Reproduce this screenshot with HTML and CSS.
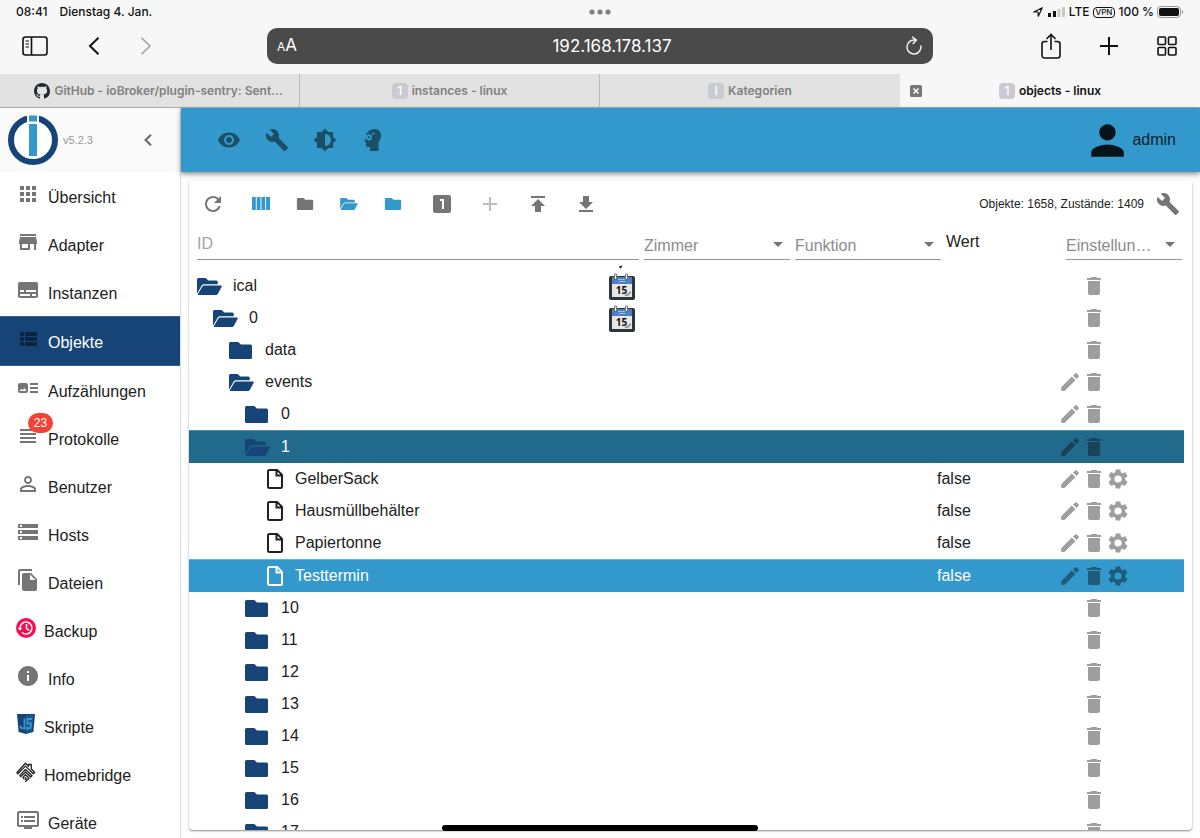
FILE: index.html
```
<!DOCTYPE html>
<html lang="de">
<head>
<meta charset="utf-8">
<meta name="viewport" content="width=device-width, initial-scale=1">
<title>objects - linux</title>
<link rel="stylesheet" href="styles.css">
</head>
<body>
<svg class="sprite" aria-hidden="true">
  <symbol id="folder" viewBox="0 0 23 17"><path d="M1.500 0H9.300l2.700 2.500h9.500A1.500 1.500 0 0 1 23 4v11.500a1.500 1.500 0 0 1-1.500 1.500h-20A1.500 1.500 0 0 1 0 15.500v-14A1.500 1.500 0 0 1 1.500 0z"/></symbol>
  <symbol id="folder-open" viewBox="0 0 25 17"><path d="M1.500 0h7.200l2.600 2.600h7.900A1.500 1.500 0 0 1 20.700 4v2.300H7.500c-1.600 0-2.600.6-3.300 1.900L.3 15.200 0 14.800V1.500A1.500 1.500 0 0 1 1.500 0zM8 7.600h16.200c.6 0 .9.5.6 1l-4 7.300c-.4.700-1 1.100-1.900 1.100H1.600c-.6 0-.9-.4-.6-1l4-7C5.700 7.900 6.500 7.600 8 7.600z"/></symbol>
  <symbol id="file" viewBox="0 0 16 20"><path d="M2.500 1h7.700L15 5.800v11.700a1.500 1.500 0 0 1-1.500 1.500h-11A1.500 1.500 0 0 1 1 17.500v-15A1.500 1.500 0 0 1 2.500 1zM9.500 1.200v5.200h5.300" fill="none" stroke="currentColor" stroke-width="2"/></symbol>
  <symbol id="trash" viewBox="0 0 24 24"><path d="M6 19c0 1.100.9 2 2 2h8c1.100 0 2-.9 2-2V7H6v12zM19 4h-3.500l-1-1h-5l-1 1H5v2h14V4z"/></symbol>
  <symbol id="pencil" viewBox="0 0 18 18"><path d="M.2 14.200 10.800 3.600 14.400 7.200 3.800 17.800c-.3.200-3 .3-3.300 0-.3-.3-.5-3.400-.3-3.600zM12 2.500 14.200.4c.4-.4 1-.4 1.400 0l2 2c.4.400.4 1 0 1.400L15.500 6z"/></symbol>
  <symbol id="gear" viewBox="2 2 20 20"><path d="M19.140 12.940c.04-.3.060-.610.060-.940 0-.320-.020-.640-.070-.940l2.030-1.580c.180-.140.230-.410.120-.610l-1.920-3.320c-.120-.220-.370-.290-.590-.220l-2.390.960c-.5-.380-1.030-.7-1.620-.940l-.360-2.540c-.040-.240-.240-.410-.480-.410h-3.840c-.240 0-.430.170-.470.410l-.360 2.540c-.590.240-1.130.570-1.620.940l-2.390-.960c-.220-.080-.470 0-.590.220L2.740 8.870c-.120.210-.080.470.120.610l2.030 1.580c-.050.3-.090.630-.090.940s.020.640.070.940l-2.030 1.580c-.180.140-.230.410-.120.610l1.920 3.320c.120.220.370.290.590.220l2.390-.960c.5.380 1.030.7 1.620.940l.360 2.540c.050.240.240.410.480.410h3.840c.240 0 .440-.170.470-.410l.360-2.540c.590-.240 1.130-.560 1.620-.940l2.390.960c.220.080.470 0 .590-.220l1.920-3.320c.120-.220.070-.470-.120-.610l-2.010-1.580zM12 15.600A3.600 3.600 0 1 1 12 8.400a3.600 3.600 0 0 1 0 7.200z"/></symbol>
  <symbol id="wrench" viewBox="0 0 24 24"><path d="M22.700 19l-9.100-9.100c.9-2.300.4-5-1.500-6.900-2-2-5-2.400-7.400-1.300L9 6 6 9 1.600 4.700C.4 7.100.9 10.100 2.900 12.100c1.900 1.900 4.600 2.400 6.900 1.500l9.100 9.100c.4.4 1 .4 1.400 0l2.300-2.300c.5-.4.5-1.100.1-1.400z"/></symbol>
  <symbol id="calendar" viewBox="0 0 26 28">
    <rect x="0" y="4" width="26" height="24" rx="2" fill="#2c3539"/>
    <rect x="3" y="5" width="20" height="20" fill="#e6e6e6"/>
    <rect x="3" y="5" width="20" height="7" fill="#4a80c4"/>
    <path d="M9 7.500h8M10 9.500h6" stroke="#9bbce6"/>
    <path d="M6.500 3v3.500M17.500 3v3.500" stroke="#555" stroke-width="3" stroke-linecap="round"/>
    <path d="M6.500 3v3.500M17.500 3v3.500" stroke="#eee" stroke-width="1.500" stroke-linecap="round"/>
    <text x="12.500" y="21.500" text-anchor="middle" font-family="Open Sans, sans-serif" font-weight="700" font-size="10" fill="#111">15</text>
    <path d="M15 24l7-5v2l-3 3z" fill="#999"/>
  </symbol>
</svg>

<header class="browser">
  <div class="status">
    <span class="status-time"><time>08:41</time><span>Dienstag 4. Jan.</span></span>
    <svg class="dots" width="22" height="6" viewBox="0 0 22 6"><circle cx="3" cy="3" r="2.600"/><circle cx="11" cy="3" r="2.600"/><circle cx="19" cy="3" r="2.600"/></svg>
    <span class="status-net">
      <svg width="10" height="10" viewBox="0 0 10 10" fill="none" stroke="#111" stroke-width="1.200" stroke-linejoin="round"><path d="M.8 5 9.300.8 5.300 9.300 5 5z"/></svg>
      <svg class="bars" width="17" height="10" viewBox="0 0 17 10"><path d="M0 6h3v4H0zM5 4h3v6H5z" fill="#111"/><path d="M9.500 2h3v8h-3zM14 0h3v10h-3z" fill="#c8c8c8"/></svg>
      <span>LTE</span>
      <span class="vpn">VPN</span>
      <span>100 %</span>
      <svg width="27" height="12" viewBox="0 0 27 12"><rect x=".5" y=".5" width="23" height="11" rx="3.500" fill="none" stroke="#999"/><rect x="2" y="2" width="20" height="8" rx="2"/><path d="M25 4v4c1.700-.6 1.700-3.400 0-4z" fill="#999"/></svg>
    </span>
  </div>

  <div class="nav">
    <div class="nav-side nav-left">
      <button type="button" aria-label="Seitenleiste"><svg width="26" height="20" viewBox="0 0 26 20" fill="none" stroke="#111" stroke-width="1.600"><rect x="1" y="1" width="24" height="18" rx="2.500"/><path d="M9.500 1v18"/><path d="M3.500 5h3.500M3.500 8h3.500M3.500 11h3.500" stroke-width="1.200"/></svg></button>
      <button type="button" aria-label="Zurück"><svg width="12" height="18" viewBox="0 0 12 18" fill="none" stroke="#111" stroke-width="2"><path d="M10.500.8 2 9l8.500 8.200"/></svg></button>
      <button type="button" aria-label="Vorwärts"><svg width="12" height="18" viewBox="0 0 12 18" fill="none" stroke="#a5a5a5" stroke-width="1.600"><path d="M1.500.8 10 9l-8.500 8.200"/></svg></button>
    </div>
    <div class="address">
      <button type="button" class="reader" aria-label="Darstellung"><small>A</small>A</button>
      <input type="text" value="192.168.178.137" aria-label="Adresse">
      <button type="button" aria-label="Neu laden"><svg width="18" height="20" viewBox="0 0 18 20" fill="none" stroke="#f2f2f2" stroke-width="1.500"><path d="M15.800 9.500A7 7 0 1 1 9 4h2M7.200.8 11.300 4 7.800 8"/></svg></button>
    </div>
    <div class="nav-side nav-right">
      <button type="button" aria-label="Teilen"><svg width="20" height="26" viewBox="0 0 20 26" fill="none" stroke="#111" stroke-width="1.600"><path d="M6.500 8.500H3.500a2.500 2.500 0 0 0-2.500 2.500v11.500A2.500 2.500 0 0 0 3.500 25h13a2.500 2.500 0 0 0 2.500-2.500V11a2.500 2.500 0 0 0-2.500-2.500h-3M10 17V2M5.500 6 10 1.500 14.500 6"/></svg></button>
      <button type="button" aria-label="Neuer Tab"><svg width="18" height="18" viewBox="0 0 18 18" stroke="#111" stroke-width="2"><path d="M9 0v18M0 9h18"/></svg></button>
      <button type="button" aria-label="Tabübersicht"><svg width="20" height="20" viewBox="0 0 20 20" fill="none" stroke="#111" stroke-width="1.600"><rect x="1" y="1" width="7.500" height="7.500" rx="1"/><rect x="11.500" y="1" width="7.500" height="7.500" rx="1"/><rect x="1" y="11.500" width="7.500" height="7.500" rx="1"/><rect x="11.500" y="11.500" width="7.500" height="7.500" rx="1"/></svg></button>
    </div>
  </div>

  <div class="tabs">
    <div class="tab tab-github"><svg width="16" height="16" viewBox="0 0 16 16" fill="#24292f"><path d="M8 0C3.580 0 0 3.580 0 8c0 3.540 2.290 6.530 5.470 7.590.4.070.550-.170.550-.380 0-.190-.010-.820-.010-1.490-2.010.370-2.530-.490-2.690-.940-.090-.230-.480-.940-.820-1.130-.280-.150-.680-.520-.010-.530.630-.010 1.080.580 1.230.820.720 1.210 1.870.870 2.330.660.070-.520.280-.870.510-1.070-1.780-.2-3.640-.890-3.640-3.950 0-.870.310-1.590.820-2.150-.080-.2-.360-1.020.080-2.120 0 0 .670-.210 2.200.820.640-.180 1.320-.270 2-.270s1.360.090 2 .270c1.530-1.040 2.200-.820 2.200-.820.440 1.100.160 1.920.080 2.120.510.560.820 1.270.820 2.150 0 3.070-1.870 3.750-3.650 3.950.290.250.540.730.540 1.480 0 1.070-.010 1.930-.010 2.200 0 .210.150.460.550.380A8.010 8.010 0 0 0 16 8c0-4.420-3.580-8-8-8z"/></svg><span>GitHub - ioBroker/plugin-sentry: Sent...</span></div>
    <div class="tab"><i class="favicon">1</i><span>instances - linux</span></div>
    <div class="tab"><i class="favicon">I</i><span>Kategorien</span></div>
    <div class="tab tab-active"><button type="button" class="tab-close" aria-label="Tab schließen"><svg width="12" height="12" viewBox="0 0 12 12"><rect width="12" height="12" rx="1.500" fill="#777"/><path d="M3.500 3.500l5 5M8.500 3.500l-5 5" stroke="#fff" stroke-width="1.500"/></svg></button><i class="favicon">1</i><span>objects - linux</span></div>
  </div>
</header>

<div class="app">
  <aside class="sidebar">
    <div class="brand">
      <svg width="50" height="50" viewBox="0 0 50 50"><circle cx="25" cy="25" r="22" fill="#fff" stroke="#164477" stroke-width="6"/><path d="M19 0h12v8H19z" fill="#fff"/><path d="M21 0.500h8v6h-8zM21 9h8v32h-8z" fill="#3399cc"/></svg>
      <span class="version">v5.2.3</span>
      <button type="button" class="collapse" aria-label="Menü einklappen"><svg width="8" height="12" viewBox="0 0 8 12" fill="none" stroke="#666" stroke-width="2"><path d="M7 .7 1.500 6 7 11.300"/></svg></button>
    </div>
    <nav class="menu">
      <a href="#"><svg viewBox="0 0 24 24"><path d="M4 8h4V4H4v4zm6 12h4v-4h-4v4zm-6 0h4v-4H4v4zm0-6h4v-4H4v4zm6 0h4v-4h-4v4zm6-10v4h4V4h-4zm-6 4h4V4h-4v4zm6 6h4v-4h-4v4zm0 6h4v-4h-4v4z"/></svg><span>Übersicht</span></a>
      <a href="#"><svg viewBox="0 0 24 24"><path d="M20 4H4v2h16V4zm1 10v-2l-1-5H4l-1 5v2h1v6h10v-6h4v6h2v-6h1zm-9 4H6v-4h6v4z"/></svg><span>Adapter</span></a>
      <a href="#"><svg viewBox="0 0 24 24"><path d="M20 4H4c-1.100 0-2 .9-2 2v12c0 1.100.9 2 2 2h16c1.100 0 2-.9 2-2V6c0-1.100-.9-2-2-2zM4 12h4v2H4v-2zm10 6H4v-2h10v2zm6 0h-4v-2h4v2zm0-4H10v-2h10v2z"/></svg><span>Instanzen</span></a>
      <a href="#" class="current" aria-current="page"><svg viewBox="0 0 24 24"><path d="M4 14h4v-4H4v4zm0 5h4v-4H4v4zM4 9h4V5H4v4zm5 5h12v-4H9v4zm0 5h12v-4H9v4zM9 5v4h12V5H9z"/></svg><span>Objekte</span></a>
      <a href="#"><svg viewBox="0 0 24 24"><path d="M22 13h-8v-2h8v2zm0-6h-8v2h8V7zm-8 10h8v-2h-8v2zm-2-8v6c0 1.100-.9 2-2 2H4c-1.100 0-2-.9-2-2V9c0-1.100.9-2 2-2h6c1.100 0 2 .9 2 2zm-1.500 6l-2.250-3-1.750 2.260-1.250-1.510L3.500 15h7z"/></svg><span>Aufzählungen</span></a>
      <a href="#"><svg viewBox="0 0 24 24"><path d="M4 15h16v-2H4v2zm0 4h16v-2H4v2zm0-8h16V9H4v2zm0-6v2h16V5H4z"/></svg><span>Protokolle</span><b class="badge">23</b></a>
      <a href="#"><svg viewBox="0 0 24 24"><path d="M12 5.900c1.160 0 2.100.940 2.100 2.100s-.940 2.100-2.100 2.100S9.900 9.160 9.900 8s.940-2.100 2.100-2.100m0 9c2.970 0 6.100 1.460 6.100 2.100v1.100H5.900V17c0-.640 3.130-2.100 6.100-2.100M12 4C9.790 4 8 5.790 8 8s1.790 4 4 4 4-1.790 4-4-1.790-4-4-4zm0 9c-2.670 0-8 1.340-8 4v3h16v-3c0-2.660-5.330-4-8-4z"/></svg><span>Benutzer</span></a>
      <a href="#"><svg viewBox="0 0 24 24"><path d="M2 20h20v-4H2v4zm2-3h2v2H4v-2zM2 4v4h20V4H2zm4 3H4V5h2v2zm-4 7h20v-4H2v4zm2-3h2v2H4v-2z"/></svg><span>Hosts</span></a>
      <a href="#"><svg viewBox="0 0 24 24"><path d="M16 1H4c-1.100 0-2 .9-2 2v14h2V3h12V1zm-1 4l6 6v10c0 1.100-.9 2-2 2H7.990C6.890 23 6 22.100 6 21l.010-14c0-1.100.890-2 1.990-2h7zm-1 7h5.500L14 6.500V12z"/></svg><span>Dateien</span></a>
      <a href="#" class="plugin"><svg viewBox="0 0 20 20"><circle cx="10" cy="10" r="10" fill="#fb0a4e"/><path d="M4 10a6 6 0 1 1 2 4.500M10.500 6v4.500l3 2" fill="none" stroke="#fff" stroke-width="1.500"/><path d="M1.800 10h4.600L4 12.700z" fill="#fff"/></svg><span>Backup</span></a>
      <a href="#"><svg viewBox="0 0 24 24"><path d="M12 2C6.480 2 2 6.480 2 12s4.480 10 10 10 10-4.480 10-10S17.520 2 12 2zm1 15h-2v-6h2v6zm0-8h-2V7h2v2z"/></svg><span>Info</span></a>
      <a href="#" class="plugin"><svg viewBox="0 0 20 20"><path d="M1 0h18l-1.600 18L10 20l-7.400-2z" fill="#164477"/><path d="M10 1.500h7.300L16 16.800l-6 1.600z" fill="#1d568c"/><path d="M8.500 4.500v10l-4-1v-2M16 5h-4.500v4.500H15l-.4 4.200-3.600 1v-2" fill="none" stroke="#3399cc" stroke-width="1.800"/></svg><span>Skripte</span></a>
      <a href="#" class="plugin"><svg viewBox="0 0 20 20" fill="none" stroke="#222" stroke-width="1.300" stroke-linecap="round" stroke-linejoin="round"><path d="M1.800 11.800.9 10.500 9.500 1.200l3 3V2.500h2.800v4.500l3.300 3.500-1.300 1.300-7.800-7.700-7.700 7.700M4.800 14.600l-1-1.200 5.700-6 6.500 6.300-1.300 1.300-5.200-5zM7.800 16.500l-.9-1.100 2.600-2.600 3.500 3.500-3.500 3.200M9.300 15.700l.9.800-1 .9"/></svg><span>Homebridge</span></a>
      <a href="#"><svg viewBox="0 0 24 24"><path d="M21 3H3c-1.100 0-2 .9-2 2v12c0 1.100.9 2 2 2h5v2h8v-2h5c1.100 0 1.990-.9 1.990-2L23 5c0-1.100-.9-2-2-2zm0 14H3V5h18v12zm-2-9H8v2h11V8zm0 4H8v2h11v-2zM7 8H5v2h2V8zm0 4H5v2h2v-2z"/></svg><span>Geräte</span></a>
    </nav>
  </aside>

  <div class="content">
    <div class="appbar">
      <button type="button" aria-label="Sichtbarkeit"><svg viewBox="0 0 24 24"><path d="M12 4.500C7 4.500 2.730 7.610 1 12c1.730 4.390 6 7.500 11 7.500s9.270-3.110 11-7.500c-1.730-4.390-6-7.500-11-7.500zM12 17c-2.760 0-5-2.240-5-5s2.240-5 5-5 5 2.240 5 5-2.240 5-5 5zm0-8c-1.660 0-3 1.340-3 3s1.340 3 3 3 3-1.340 3-3-1.340-3-3-3z"/></svg></button>
      <button type="button" aria-label="Einstellungen"><svg><use href="#wrench"/></svg></button>
      <button type="button" aria-label="Farbschema"><svg viewBox="0 0 24 24"><path d="M20 15.310L23.310 12 20 8.690V4h-4.690L12 .690 8.690 4H4v4.690L.690 12 4 15.310V20h4.690L12 23.310 15.310 20H20v-4.690zM12 18V6c3.310 0 6 2.690 6 6s-2.690 6-6 6z"/></svg></button>
      <button type="button" aria-label="Expertenmodus"><svg viewBox="0 0 24 24"><path d="M13.500 1C17.500 1 20 3.800 20 7.500c0 3-.8 5-2.500 6.300V23H9v-4H6.800C5.600 19 5 18.400 5 17.300V14H4c-.6 0-.8-.4-.5-1L5 9.500C5 4.500 8.500 1 13.500 1z"/><circle cx="7.800" cy="9.300" r="2" fill="none" stroke="#3399cc" stroke-width="1.800"/><path d="M7.800 5.700v1.500M7.800 11.300v1.500M4.700 7.500l1.300.8M9.600 10.300l1.300.8M9.600 8.300l1.300-.8M4.700 11.100l1.300-.8" stroke="#3399cc" stroke-width="1.300"/><circle cx="12.300" cy="5.600" r="1.200" fill="#3399cc"/></svg></button>
      <div class="user"><svg viewBox="0 0 24 24"><path d="M12 12c2.210 0 4-1.790 4-4s-1.790-4-4-4-4 1.790-4 4 1.790 4 4 4zm0 2c-2.670 0-8 1.340-8 4v2h16v-2c0-2.660-5.330-4-8-4z"/></svg><span>admin</span></div>
    </div>

    <main class="page">
      <section class="card">
        <div class="tools">
          <button type="button" aria-label="Aktualisieren"><svg viewBox="0 0 24 24"><path d="M17.650 6.350C16.200 4.900 14.210 4 12 4c-4.420 0-7.990 3.580-7.990 8s3.570 8 7.990 8c3.730 0 6.840-2.550 7.730-6h-2.080c-.820 2.330-3.040 4-5.650 4-3.310 0-6-2.690-6-6s2.690-6 6-6c1.660 0 3.140.690 4.220 1.780L13 11h7V4l-2.350 2.350z"/></svg></button>
          <button type="button" class="blue" aria-label="Spalten"><svg viewBox="0 0 24 24"><path d="M3 5h3.800v13H3zM7.700 5h3.800v13H7.700zM12.400 5h3.800v13h-3.800zM17.100 5H21v13h-3.900z"/></svg></button>
          <div class="levels">
            <button type="button" aria-label="Alle schließen"><svg><use href="#folder"/></svg></button>
            <button type="button" class="blue" aria-label="Alle öffnen"><svg><use href="#folder-open"/></svg></button>
            <button type="button" class="blue" aria-label="Ebene schließen"><svg><use href="#folder"/></svg></button>
          </div>
          <button type="button" aria-label="Zustandsansicht"><svg viewBox="0 0 24 24"><path d="M19 3H5c-1.100 0-2 .9-2 2v14c0 1.100.9 2 2 2h14c1.100 0 2-.9 2-2V5c0-1.100-.9-2-2-2zm-5 14h-2V9h-2V7h4v10z"/></svg></button>
          <button type="button" class="disabled" aria-label="Hinzufügen" disabled><svg viewBox="0 0 24 24"><path d="M19 13h-6v6h-2v-6H5v-2h6V5h2v6h6v2z"/></svg></button>
          <button type="button" aria-label="Hochladen"><svg viewBox="0 0 24 24"><path d="M5 4v2h14V4H5zm0 10h4v6h6v-6h4l-7-7-7 7z"/></svg></button>
          <button type="button" aria-label="Herunterladen"><svg viewBox="0 0 24 24"><path d="M19 10h-4V4H9v6H5l7 7 7-7zM5 18v2h14v-2H5z"/></svg></button>
          <span class="count">Objekte: 1658, Zustände: 1409</span>
          <button type="button" aria-label="Spalten anpassen"><svg><use href="#wrench"/></svg></button>
        </div>

        <div class="filters">
          <input class="filter-id" type="text" placeholder="ID" aria-label="ID">
          <div class="filter"><select aria-label="Zimmer"><option>Zimmer</option></select></div>
          <div class="filter"><select aria-label="Funktion"><option>Funktion</option></select></div>
          <span class="filter-value">Wert</span>
          <div class="filter filter-settings"><select aria-label="Einstellungen"><option>Einstellungen</option></select></div>
        </div>

        <table class="tree" aria-label="Objekte">
          <colgroup><col><col class="col-value"><col class="col-actions"></colgroup>
          <tbody>
            <tr class="l0"><td><div class="name"><svg class="open"><use href="#folder-open"/></svg><span>ical</span><svg class="cal" viewBox="0 0 26 28"><path d="M10-5.500l3-1v1.500l-2 1.500z" fill="#111"/><use href="#calendar" width="26" height="28"/></svg></div></td><td></td><td><div class="actions"><button type="button" aria-label="Löschen"><svg><use href="#trash"/></svg></button></div></td></tr>
            <tr class="l1"><td><div class="name"><svg class="open"><use href="#folder-open"/></svg><span>0</span><svg class="cal"><use href="#calendar"/></svg></div></td><td></td><td><div class="actions"><button type="button" aria-label="Löschen"><svg><use href="#trash"/></svg></button></div></td></tr>
            <tr class="l2"><td><div class="name"><svg class="closed"><use href="#folder"/></svg><span>data</span></div></td><td></td><td><div class="actions"><button type="button" aria-label="Löschen"><svg><use href="#trash"/></svg></button></div></td></tr>
            <tr class="l2"><td><div class="name"><svg class="open"><use href="#folder-open"/></svg><span>events</span></div></td><td></td><td><div class="actions"><button type="button" class="edit" aria-label="Bearbeiten"><svg><use href="#pencil"/></svg></button><button type="button" aria-label="Löschen"><svg><use href="#trash"/></svg></button></div></td></tr>
            <tr class="l3"><td><div class="name"><svg class="closed"><use href="#folder"/></svg><span>0</span></div></td><td></td><td><div class="actions"><button type="button" class="edit" aria-label="Bearbeiten"><svg><use href="#pencil"/></svg></button><button type="button" aria-label="Löschen"><svg><use href="#trash"/></svg></button></div></td></tr>
            <tr class="l3 parent"><td><div class="name"><svg class="open"><use href="#folder-open"/></svg><span>1</span></div></td><td></td><td><div class="actions"><button type="button" class="edit" aria-label="Bearbeiten"><svg><use href="#pencil"/></svg></button><button type="button" aria-label="Löschen"><svg><use href="#trash"/></svg></button></div></td></tr>
            <tr class="l4"><td><div class="name"><svg class="doc"><use href="#file"/></svg><span>GelberSack</span></div></td><td>false</td><td><div class="actions"><button type="button" class="edit" aria-label="Bearbeiten"><svg><use href="#pencil"/></svg></button><button type="button" aria-label="Löschen"><svg><use href="#trash"/></svg></button><button type="button" class="setup" aria-label="Konfigurieren"><svg><use href="#gear"/></svg></button></div></td></tr>
            <tr class="l4"><td><div class="name"><svg class="doc"><use href="#file"/></svg><span>Hausmüllbehälter</span></div></td><td>false</td><td><div class="actions"><button type="button" class="edit" aria-label="Bearbeiten"><svg><use href="#pencil"/></svg></button><button type="button" aria-label="Löschen"><svg><use href="#trash"/></svg></button><button type="button" class="setup" aria-label="Konfigurieren"><svg><use href="#gear"/></svg></button></div></td></tr>
            <tr class="l4"><td><div class="name"><svg class="doc"><use href="#file"/></svg><span>Papiertonne</span></div></td><td>false</td><td><div class="actions"><button type="button" class="edit" aria-label="Bearbeiten"><svg><use href="#pencil"/></svg></button><button type="button" aria-label="Löschen"><svg><use href="#trash"/></svg></button><button type="button" class="setup" aria-label="Konfigurieren"><svg><use href="#gear"/></svg></button></div></td></tr>
            <tr class="l4 selected"><td><div class="name"><svg class="doc"><use href="#file"/></svg><span>Testtermin</span></div></td><td>false</td><td><div class="actions"><button type="button" class="edit" aria-label="Bearbeiten"><svg><use href="#pencil"/></svg></button><button type="button" aria-label="Löschen"><svg><use href="#trash"/></svg></button><button type="button" class="setup" aria-label="Konfigurieren"><svg><use href="#gear"/></svg></button></div></td></tr>
            <tr class="l3"><td><div class="name"><svg class="closed"><use href="#folder"/></svg><span>10</span></div></td><td></td><td><div class="actions"><button type="button" aria-label="Löschen"><svg><use href="#trash"/></svg></button></div></td></tr>
            <tr class="l3"><td><div class="name"><svg class="closed"><use href="#folder"/></svg><span>11</span></div></td><td></td><td><div class="actions"><button type="button" aria-label="Löschen"><svg><use href="#trash"/></svg></button></div></td></tr>
            <tr class="l3"><td><div class="name"><svg class="closed"><use href="#folder"/></svg><span>12</span></div></td><td></td><td><div class="actions"><button type="button" aria-label="Löschen"><svg><use href="#trash"/></svg></button></div></td></tr>
            <tr class="l3"><td><div class="name"><svg class="closed"><use href="#folder"/></svg><span>13</span></div></td><td></td><td><div class="actions"><button type="button" aria-label="Löschen"><svg><use href="#trash"/></svg></button></div></td></tr>
            <tr class="l3"><td><div class="name"><svg class="closed"><use href="#folder"/></svg><span>14</span></div></td><td></td><td><div class="actions"><button type="button" aria-label="Löschen"><svg><use href="#trash"/></svg></button></div></td></tr>
            <tr class="l3"><td><div class="name"><svg class="closed"><use href="#folder"/></svg><span>15</span></div></td><td></td><td><div class="actions"><button type="button" aria-label="Löschen"><svg><use href="#trash"/></svg></button></div></td></tr>
            <tr class="l3"><td><div class="name"><svg class="closed"><use href="#folder"/></svg><span>16</span></div></td><td></td><td><div class="actions"><button type="button" aria-label="Löschen"><svg><use href="#trash"/></svg></button></div></td></tr>
            <tr class="l3"><td><div class="name"><svg class="closed"><use href="#folder"/></svg><span>17</span></div></td><td></td><td><div class="actions"><button type="button" aria-label="Löschen"><svg><use href="#trash"/></svg></button></div></td></tr>
          </tbody>
        </table>
      </section>
    </main>
  </div>
</div>
<div class="home-indicator"></div>
</body>
</html>
```

FILE: styles.css
```
* { box-sizing: border-box; }

body {
  margin: 0;
  height: 100vh;
  display: flex;
  flex-direction: column;
  overflow: hidden;
  font: 16px/24px "Liberation Sans", Arial, sans-serif;
  color: #212121;
  background: #fff;
}

button, input, select { font: inherit; color: inherit; border: 0; border-radius: 0; background: none; margin: 0; padding: 0; }
button { display: flex; align-items: center; justify-content: center; flex: none; }
svg { display: block; flex: none; }
svg:not([fill]) { fill: currentColor; }
.sprite { display: none; }

/* Browser chrome */
.browser { flex: none; background: #f7f7f7; font-family: Inter, sans-serif; color: #111; border-bottom: 1px solid #aaa; }

.status { display: grid; grid-template-columns: 1fr auto 1fr; align-items: center; height: 24px; padding: 0 16px; font-size: 12px; font-weight: 500; }
.status-time { display: flex; gap: 12px; }
.dots { color: #808080; }
.status-net { display: flex; align-items: center; justify-content: flex-end; gap: 3px; }
.bars { margin: 0 1px 0 2px; }
.vpn { border: 1px solid #111; border-radius: 4px; padding: 0 2px; font-size: 8px; line-height: 9px; }

.nav { display: flex; align-items: center; height: 50px; padding-bottom: 6px; }
.nav-side { display: flex; align-items: center; width: 267px; }
.nav-left { padding-left: 22px; gap: 40px; }
.nav-right { justify-content: flex-end; padding-right: 23px; gap: 39px; }
.address { flex: 1; display: flex; align-items: center; height: 36px; padding: 0 10px; border-radius: 10px; background: #4a4a4a; color: #fff; }
.address input { flex: 1; min-width: 0; text-align: center; padding-left: 22px; font-size: 17px; }
.reader { align-items: baseline; font-size: 17px; }
.reader small { font-size: 12px; }

.tabs { display: grid; grid-template-columns: repeat(4, 1fr); height: 33px; background: #e2e2e2; font-size: 12px; font-weight: 600; color: #808080; }
.tab { position: relative; display: flex; align-items: center; justify-content: center; gap: 4px; border-right: 1px solid #bbb; white-space: nowrap; overflow: hidden; }
.tab-github { padding-left: 18px; }
.tab:nth-child(3) { border-right: 0; }
.tab-active { background: #f7f7f7; color: #111; border-right: 0; }
.tab-close { position: absolute; left: 10px; top: 11px; }
.favicon { width: 16px; height: 16px; border-radius: 4px; background: #cacad4; color: #fff; font-style: normal; font-weight: 500; line-height: 16px; text-align: center; }

/* Sidebar */
.app { flex: 1; min-height: 0; display: flex; }
.sidebar { flex: none; width: 181px; border-right: 1px solid #ddd; overflow: hidden; }
.brand { display: flex; align-items: center; height: 64px; padding: 0 24px 0 8px; gap: 5px; background: #fafafa; }
.version { font-size: 11px; color: #999; }
.collapse { width: 16px; height: 24px; margin-left: auto; }

.menu a { position: relative; display: flex; align-items: center; gap: 8px; height: 48px; padding: 3px 16px 0; color: inherit; text-decoration: none; }
.menu svg { width: 24px; height: 24px; margin-bottom: 7px; color: #757575; }
.menu .plugin svg { width: 20px; height: 20px; }
.menu .current { height: 50px; border: solid #37608d; border-width: 1px 0; background: #164477; color: #fff; }
.menu .current svg { color: #0b2440; }
.badge { position: absolute; left: 28px; top: -1px; min-width: 25px; height: 20px; border-radius: 10px; background: #f44336; color: #fff; font-size: 12px; font-weight: 400; line-height: 20px; text-align: center; }

/* App bar */
.content { flex: 1; min-width: 0; display: flex; flex-direction: column; background: #fdfdfd; }
.appbar { position: relative; flex: none; display: flex; align-items: center; height: 64px; padding: 0 24px; background: #3399cc; box-shadow: 0 2px 5px rgba(0, 0, 0, .45); color: #195065; }
.appbar button { width: 48px; height: 48px; }
.appbar button svg { width: 24px; height: 24px; }
.user { display: flex; align-items: center; margin-left: auto; color: #0a1f29; }
.user svg { width: 49px; height: 49px; color: #06141a; }

/* Object list */
.page { flex: 1; min-height: 0; display: flex; padding: 8px; }
.card { flex: 1; min-width: 0; overflow: hidden; border-radius: 4px; background: #fff; box-shadow: 0 1px 2px rgba(0, 0, 0, .45); }

.tools { display: flex; align-items: center; height: 48px; color: #757575; }
.tools button { width: 48px; height: 48px; }
.tools svg { width: 24px; height: 24px; }
.levels { display: flex; margin: 0 3px 0 -2px; }
.levels button { width: 44px; }
.levels svg { width: 18px; height: 12px; }
.tools .blue { color: #3399cc; }
.tools .disabled { color: #bdbdbd; }
.count { margin-left: auto; font-size: 12px; color: #212121; }

.filters { display: flex; gap: 5px; height: 32px; margin-bottom: 10px; padding: 0 10px 0 8px; color: #212121; }
.filter-id { flex: 1; min-width: 0; border-bottom: 1px solid #949494; }
.filter-id::placeholder { color: #a3a3a3; opacity: 1; }
.filter { position: relative; width: 146px; border-bottom: 1px solid #949494; }
.filter::after { content: ""; position: absolute; right: 7px; top: 14px; border: 5px solid transparent; border-top-color: #757575; border-bottom: 0; }
.filter select { width: 100%; height: 32px; padding: 3px 28px 0 0; appearance: none; color: #8c8c8c; text-overflow: ellipsis; }
.filter-value { width: 115px; line-height: 28px; }
.filter-settings { width: 116px; }

.tree { width: 100%; padding-right: 8px; border-spacing: 0; table-layout: fixed; }
.tree td { height: 32px; padding: 0; }
.col-value { width: 121px; }
.col-actions { width: 126px; }
.name { display: flex; align-items: center; padding: 0 5px 0 8px; }
.l1 .name { padding-left: 24px; }
.l2 .name { padding-left: 40px; }
.l3 .name { padding-left: 56px; }
.l4 .name { padding-left: 78px; }
.open, .closed { height: 17px; color: #164477; }
.open { width: 25px; margin-right: 11px; }
.closed { width: 23px; margin-right: 13px; }
.doc { width: 16px; height: 20px; margin-right: 12px; }
/* the adapter icon ends where the ID filter ends */
.cal { width: 26px; height: 28px; margin: 0 297px 0 auto; overflow: visible; }

.actions { display: grid; grid-template-columns: 24px 24px 24px; color: #9e9e9e; }
.actions button { grid-column: 2; grid-row: 1; height: 24px; }
.actions .edit { grid-column: 1; }
.actions .setup { grid-column: 3; }
.actions svg { width: 24px; height: 24px; }
.actions .edit svg { width: 18px; height: 18px; }
.actions .setup svg { width: 20px; height: 20px; }

.parent { background: #226a8c; color: #fff; }
.selected { background: #3399cc; color: #fff; }
.tree .parent td, .tree .selected td { height: 33px; border-top: 1px solid rgba(255, 255, 255, .25); }
.parent .actions { color: #174257; }
.selected .actions { color: #1e5c7a; }

.home-indicator { position: absolute; left: 50%; bottom: 7px; width: 316px; height: 6px; margin-left: -158px; border-radius: 3px; background: #000; }
```
